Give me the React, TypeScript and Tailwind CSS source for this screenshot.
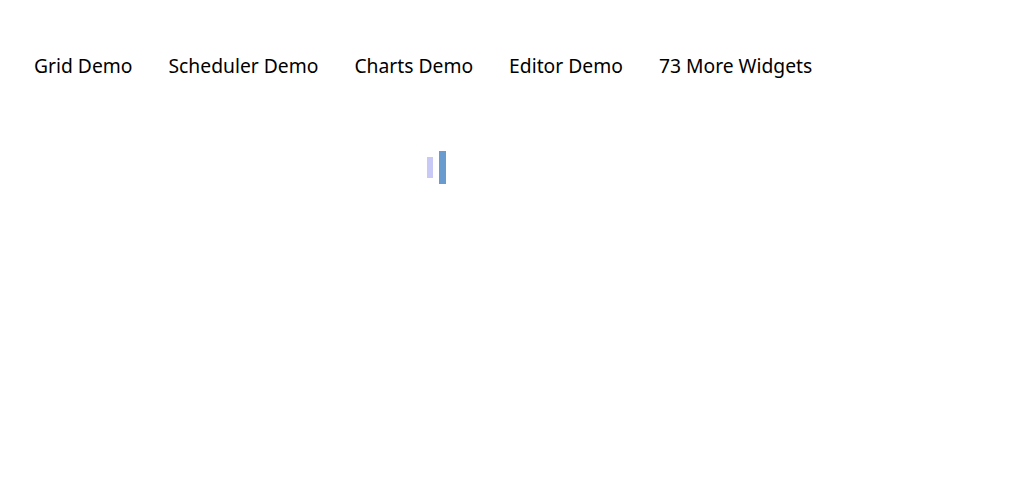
import React from 'react';

const links = ['Grid Demo', 'Scheduler Demo', 'Charts Demo', 'Editor Demo', '73 More Widgets'];

const App: React.FC = () => {
  return (
    <div className="min-h-screen w-full bg-white text-black" style={{ fontFamily: '"Noto Sans", sans-serif' }}>
      <nav className="flex items-center gap-9 pl-[34px] pt-[52px]">
        {links.map((label) => (
          <a key={label} href="#" className="text-[19.3px] leading-[28px] text-black">
            {label}
          </a>
        ))}
      </nav>
      <div className="flex items-center gap-[6px] pl-[427px] pt-[71px]">
        <div className="h-[21px] w-[6px] bg-[#c9c9f7]" />
        <div className="h-[33px] w-[7px] bg-[#6a9bcf]" />
      </div>
    </div>
  );
};

export default App;
